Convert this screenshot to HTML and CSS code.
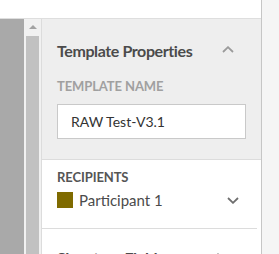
FILE: index.html
```html
<!DOCTYPE html>
<html lang="en">
<head>
  <meta charset="UTF-8" />
  <title>Template Properties</title>
  <link rel="stylesheet" href="styles.css">
</head>
<body>
  <div class="frame">
    <div class="workspace">
      <div class="topbar"></div>
      <div class="main">
        <div class="doc-area"></div>
        <div class="scroll-track">
          <div class="scroll-arrow"></div>
          <div class="scroll-thumb"></div>
        </div>
        <div class="panel">
          <!-- Template properties -->
          <div class="section section-gray">
            <div class="section-head">
              <span class="section-title">Template Properties</span>
              <svg class="chevron" width="12" height="7" viewBox="0 0 12 7">
                <path d="M1 6 L6 1.2 L11 6" fill="none" stroke="#9a9a9a" stroke-width="1.8"/>
              </svg>
            </div>
            <div class="field-label">TEMPLATE NAME</div>
            <div class="text-input">RAW Test-V3.1</div>
          </div>

          <!-- Recipients -->
          <div class="section section-white">
            <div class="sub-label">RECIPIENTS</div>
            <div class="recipient-row">
              <span class="swatch"></span>
              <span class="recipient-name">Participant 1</span>
              <svg class="chevron" width="12" height="7" viewBox="0 0 12 7">
                <path d="M1 1 L6 5.8 L11 1" fill="none" stroke="#6e6e6e" stroke-width="1.8"/>
              </svg>
            </div>
          </div>

          <!-- Signature fields -->
          <div class="section section-last">
            <div class="section-head">
              <span class="section-title">Signature Fields</span>
              <svg class="chevron" width="12" height="7" viewBox="0 0 12 7">
                <path d="M1 6 L6 1.2 L11 6" fill="none" stroke="#9a9a9a" stroke-width="1.8"/>
              </svg>
            </div>
          </div>
        </div>
      </div>
    </div>
    <div class="side-strip"></div>
  </div>
</body>
</html>
```

FILE: styles.css
```css
body {
  margin: 0;
  width: 279px;
  height: 254px;
  overflow: hidden;
  font-family: 'Lato', 'Noto Sans', Arial, sans-serif;
  color: #4b4b4b;
  background: #fff;
}
.frame {
  display: flex;
  height: 254px;
}
.workspace {
  width: 261px;
  display: flex;
  flex-direction: column;
}
.topbar {
  height: 18px;
  background: #fff;
  border-bottom: 1px solid #dedede;
}
.main {
  flex: 1;
  display: flex;
  min-height: 0;
}
.doc-area {
  width: 24px;
  background: #a9a9a9;
}
.scroll-track {
  width: 17px;
  background: #f1f1f1;
  display: flex;
  flex-direction: column;
  align-items: center;
}
.scroll-arrow {
  width: 0;
  height: 0;
  margin-top: 6px;
  border-left: 4px solid transparent;
  border-right: 4px solid transparent;
  border-bottom: 4px solid #a3a3a3;
}
.scroll-thumb {
  width: 13px;
  flex: 1;
  margin-top: 7px;
  background: #c1c1c1;
}
.panel {
  width: 219px;
  border-left: 1px solid #dcdcdc;
  display: flex;
  flex-direction: column;
  overflow: hidden;
}
.section {
  padding: 0 16px 0 15px;
  flex-shrink: 0;
}
.section-gray {
  background: #eeeeee;
  height: 141px;
  padding-top: 22px;
  box-sizing: border-box;
  border-bottom: 1px solid #dcdcdc;
}
.section-head {
  display: flex;
  align-items: center;
  justify-content: space-between;
  padding-right: 11px;
}
.section-title {
  font-size: 16px;
  font-weight: 700;
  color: #4b4b4b;
  line-height: 20px;
  letter-spacing: -0.4px;
}
.chevron {
  display: block;
}
.section-head .chevron {
  margin-top: -3px;
}
.field-label {
  margin-top: 17px;
  font-size: 13px;
  font-weight: 700;
  color: #a0a0a0;
  line-height: 16px;
  letter-spacing: -0.1px;
}
.text-input {
  margin-top: 10px;
  width: 189px;
  height: 35px;
  box-sizing: border-box;
  background: #fff;
  border: 1px solid #c9c9c9;
  padding: 0 13px;
  font-size: 14px;
  line-height: 33px;
  color: #333;
}
.section-white {
  background: #fff;
  height: 68px;
  box-sizing: border-box;
  padding-top: 9px;
  padding-right: 5px;
}
.sub-label {
  font-size: 13px;
  font-weight: 700;
  color: #555;
  line-height: 16px;
  letter-spacing: -0.1px;
}
.recipient-row {
  display: flex;
  align-items: center;
  margin-top: 6px;
  padding-right: 17px;
}
.swatch {
  width: 16px;
  height: 16px;
  background: #7f6b00;
  margin-right: 6px;
}
.recipient-name {
  flex: 1;
  font-size: 15px;
  line-height: 18px;
  color: #4b4b4b;
}
.section-last {
  border-top: 1px solid #dcdcdc;
  margin-right: 4px;
  padding-top: 19px;
  background: #fff;
}
.section-last .section-head {
  padding-right: 17px;
}
.side-strip {
  flex: 1;
  background: #f5f5f5;
  border-left: 1px solid #c6c6c6;
}
```
